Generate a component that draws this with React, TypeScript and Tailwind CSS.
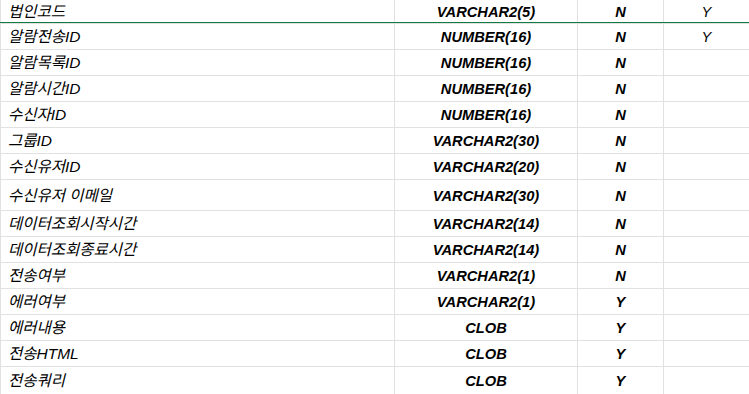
import React from 'react';

type Row = {
  name: string;
  type: string;
  nn: string;
  pk?: string;
  h: string;
};

const rows: Row[] = [
  { name: '알람전송ID', type: 'NUMBER(16)', nn: 'N', pk: 'Y', h: 'h-[27px] border-t' },
  { name: '알람목록ID', type: 'NUMBER(16)', nn: 'N', h: 'h-[26px]' },
  { name: '알람시간ID', type: 'NUMBER(16)', nn: 'N', h: 'h-[26px]' },
  { name: '수신자ID', type: 'NUMBER(16)', nn: 'N', h: 'h-[26px]' },
  { name: '그룹ID', type: 'VARCHAR2(30)', nn: 'N', h: 'h-[26px]' },
  { name: '수신유저ID', type: 'VARCHAR2(20)', nn: 'N', h: 'h-[26px]' },
  { name: '수신유저 이메일', type: 'VARCHAR2(30)', nn: 'N', h: 'h-[31px]' },
  { name: '데이터조회시작시간', type: 'VARCHAR2(14)', nn: 'N', h: 'h-[26px]' },
  { name: '데이터조회종료시간', type: 'VARCHAR2(14)', nn: 'N', h: 'h-[26px]' },
  { name: '전송여부', type: 'VARCHAR2(1)', nn: 'N', h: 'h-[26px]' },
  { name: '에러여부', type: 'VARCHAR2(1)', nn: 'Y', h: 'h-[26px]' },
  { name: '에러내용', type: 'CLOB', nn: 'Y', h: 'h-[26px]' },
  { name: '전송HTML', type: 'CLOB', nn: 'Y', h: 'h-[26px]' },
  { name: '전송쿼리', type: 'CLOB', nn: 'Y', h: 'h-[28px]' },
];

const font = "font-['Liberation_Sans','Noto_Sans_CJK_KR',sans-serif]";

const Cells = ({ r }: { r: Row }) => (
  <>
    <div className="flex w-[395px] items-center border-r border-l border-[#e1e1e1] pt-[1px] pl-[7px] text-[15.5px] italic">
      {r.name}
    </div>
    <div className="flex w-[183px] items-center justify-center border-r border-[#e1e1e1] pt-[1px] font-bold italic">
      {r.type}
    </div>
    <div className="flex w-[86px] items-center justify-center border-r border-[#e1e1e1] pt-[1px] font-bold italic">
      {r.nn}
    </div>
    <div className="flex flex-1 items-center justify-center pt-[1px] italic">{r.pk}</div>
  </>
);

const App = () => {
  return (
    <div className={`h-[394px] w-[749px] overflow-hidden bg-white text-[14.67px] text-black ${font}`}>
      <div className="flex h-[23px] border-b border-[#107c41]">
        <Cells r={{ name: '법인코드', type: 'VARCHAR2(5)', nn: 'N', pk: 'Y', h: '' }} />
      </div>
      {rows.map((r, i) => (
        <div key={i} className={`flex border-b border-[#e1e1e1] ${r.h}`}>
          <Cells r={r} />
        </div>
      ))}
    </div>
  );
};

export default App;
